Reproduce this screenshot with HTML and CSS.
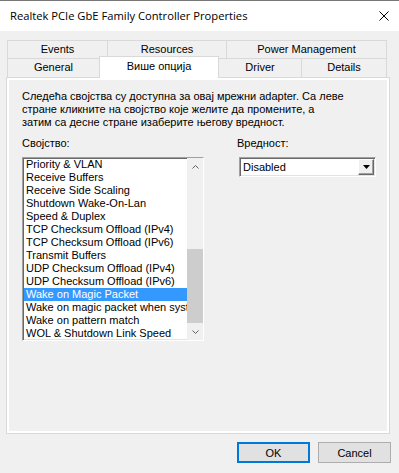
FILE: index.html
```html
<!DOCTYPE html>
<html lang="sr">
<head>
    <meta charset="UTF-8">
    <title>Realtek PCIe GbE Family Controller Properties</title>
    <link rel="stylesheet" href="styles.css">
</head>
<body>

    <!-- Title bar -->
    <div class="titlebar">
        <span class="title">Realtek PCIe GbE Family Controller Properties</span>
        <svg class="close" width="10" height="10" viewBox="0 0 10 10">
            <path d="M0.5 0.5L9.5 9.5M9.5 0.5L0.5 9.5" stroke="#000" stroke-width="1"/>
        </svg>
    </div>

    <!-- Tabs -->
    <div class="tabs">
        <div class="tab-row">
            <div class="tab t-events">Events</div>
            <div class="tab t-resources">Resources</div>
            <div class="tab t-power">Power Management</div>
        </div>
        <div class="tab-row front">
            <div class="tab t-general">General</div>
            <div class="tab t-advanced selected">Више опција</div>
            <div class="tab t-driver">Driver</div>
            <div class="tab t-details">Details</div>
        </div>
    </div>

    <!-- Tab page -->
    <div class="panel">
        <p class="desc">Следећа својства су доступна за овај мрежни adapter. Са леве<br>
        стране кликните на својство које желите да промените, а<br>
        затим са десне стране изаберите његову вредност.</p>

        <div class="fields">
            <div class="field-prop">
                <div class="label">Својство:</div>
                <div class="listbox">
                    <ul class="items">
                        <li>Priority &amp; VLAN</li>
                        <li>Receive Buffers</li>
                        <li>Receive Side Scaling</li>
                        <li>Shutdown Wake-On-Lan</li>
                        <li>Speed &amp; Duplex</li>
                        <li>TCP Checksum Offload (IPv4)</li>
                        <li>TCP Checksum Offload (IPv6)</li>
                        <li>Transmit Buffers</li>
                        <li>UDP Checksum Offload (IPv4)</li>
                        <li>UDP Checksum Offload (IPv6)</li>
                        <li class="active">Wake on Magic Packet</li>
                        <li>Wake on magic packet when system is in the S0ix power state</li>
                        <li>Wake on pattern match</li>
                        <li>WOL &amp; Shutdown Link Speed</li>
                    </ul>
                    <div class="scrollbar">
                        <div class="sb-btn">
                            <svg width="7" height="4" viewBox="0 0 7 4"><path d="M0.5 3.5L3.5 0.5L6.5 3.5" fill="none" stroke="#606060"/></svg>
                        </div>
                        <div class="sb-track"><div class="sb-thumb"></div></div>
                        <div class="sb-btn">
                            <svg width="7" height="4" viewBox="0 0 7 4"><path d="M0.5 0.5L3.5 3.5L6.5 0.5" fill="none" stroke="#606060"/></svg>
                        </div>
                    </div>
                </div>
            </div>
            <div class="field-value">
                <div class="label">Вредност:</div>
                <div class="combo">
                    <span class="combo-text">Disabled</span>
                    <div class="combo-btn">
                        <svg width="7" height="4" viewBox="0 0 7 4"><path d="M0 0H7L3.5 4Z" fill="#000"/></svg>
                    </div>
                </div>
            </div>
        </div>
    </div>

    <!-- Buttons -->
    <div class="actions">
        <button class="btn default">OK</button>
        <button class="btn">Cancel</button>
    </div>

</body>
</html>
```

FILE: styles.css
```css
/* Global */
* {
    margin: 0;
    padding: 0;
    box-sizing: border-box;
}
body {
    width: 399px;
    height: 473px;
    background: #f0f0f0;
    font-family: 'Liberation Sans', Arial, sans-serif;
    font-size: 11px;
    color: #000;
    overflow: hidden;
}

/* Title bar */
.titlebar {
    height: 31px;
    background: #fff;
    border-top: 1px solid #777;
    display: flex;
    align-items: center;
    justify-content: space-between;
    padding: 0 10px 0 10px;
}
.title {
    font-family: 'Open Sans', 'Noto Sans', sans-serif;
    font-size: 11.2px;
    margin-top: -1px;
}
.close {
    margin-top: -1px;
}

/* Tabs */
.tabs {
    margin: 9px 0 0 7px;
    width: 380px;
}
.tab-row {
    display: flex;
    height: 18px;
}
.tab-row.front {
    height: 19px;
}
.tab {
    background: #f0f0f0;
    border: 1px solid #d9d9d9;
    border-bottom: none;
    margin-left: -1px;
    text-align: center;
    line-height: 17px;
}
.tab:first-child {
    margin-left: 0;
}
.t-events { width: 101px; }
.t-resources { width: 120px; }
.t-power { width: 161px; }
.t-general { width: 93px; }
.t-advanced { width: 120px; }
.t-driver { width: 84px; }
.t-details { width: 86px; }
.tab.selected {
    position: relative;
    z-index: 2;
    background: #fff;
    height: 22px;
    margin-top: -2px;
    line-height: 18px;
}

/* Tab page */
.panel {
    margin-left: 6px;
    width: 384px;
    height: 357px;
    border: 1px solid #d9d9d9;
    box-shadow: inset 0 0 0 2px #fff;
    padding: 12px 15px 0 15px;
}
.desc {
    line-height: 13px;
}
.fields {
    display: flex;
    margin-top: 8px;
}
.label {
    line-height: 13px;
    margin-bottom: 7px;
}
.field-prop {
    width: 182px;
}
.field-value {
    margin-left: 33px;
}

/* List box */
.listbox {
    width: 182px;
    height: 184px;
    display: flex;
    background: #fff;
    border: 1px solid;
    border-color: #a0a0a0 #fff #fff #a0a0a0;
    box-shadow: inset 1px 1px #696969, inset -1px -1px #e3e3e3;
}
.items {
    list-style: none;
    flex: 1;
    overflow: hidden;
    padding-left: 1px;
}
.items li {
    height: 13px;
    line-height: 13px;
    padding-left: 2px;
    white-space: nowrap;
    overflow: hidden;
}
.items li.active {
    background: #3399ff;
    color: #fff;
}
.scrollbar {
    width: 16px;
    background: #f0f0f0;
    display: flex;
    flex-direction: column;
}
.sb-btn {
    height: 17px;
    display: flex;
    align-items: center;
    justify-content: center;
}
.sb-track {
    flex: 1;
    display: flex;
    flex-direction: column;
    justify-content: flex-end;
}
.sb-thumb {
    height: 74px;
    background: #cdcdcd;
}

/* Combo box */
.combo {
    margin-left: 2px;
    width: 137px;
    height: 20px;
    background: #fff;
    display: flex;
    align-items: center;
    justify-content: space-between;
    border: 1px solid;
    border-color: #a0a0a0 #fff #fff #a0a0a0;
    box-shadow: inset 1px 1px #696969, inset -1px -1px #e3e3e3;
    padding: 1px 1px 1px 3px;
}
.combo-btn {
    width: 16px;
    height: 16px;
    background: #f0f0f0;
    border: 1px solid;
    border-color: #fff #696969 #696969 #fff;
    box-shadow: inset -1px -1px #a0a0a0;
    display: flex;
    align-items: center;
    justify-content: center;
}

/* Buttons */
.actions {
    display: flex;
    justify-content: flex-end;
    gap: 8px;
    margin-top: 8px;
    padding-right: 8px;
}
.btn {
    width: 73px;
    height: 21px;
    background: #e1e1e1;
    border: 1px solid #adadad;
    font-family: 'Liberation Sans', Arial, sans-serif;
    font-size: 11px;
    color: #000;
}
.btn.default {
    border: 2px solid #0078d7;
}
```
